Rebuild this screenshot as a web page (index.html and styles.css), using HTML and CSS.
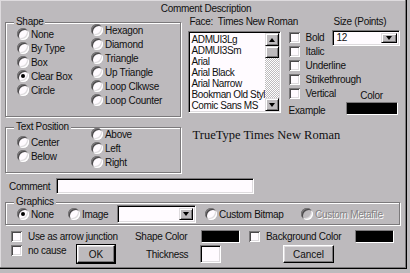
FILE: index.html
```html
<!DOCTYPE HTML>
<html>
	<head>
		<link rel="stylesheet" href="styles.css">
	</head>
	<body>
		<div class="dialog">
			<div class="title">Comment Description</div>
			<div class="upper">
				<div class="left-col">
					<div class="group shape">
						<div class="legend">Shape</div>
						<div class="cols">
							<div class="col col-a">
								<div class="opt"><span class="radio"></span>None</div>
								<div class="opt"><span class="radio"></span>By Type</div>
								<div class="opt"><span class="radio"></span>Box</div>
								<div class="opt"><span class="radio on"></span>Clear Box</div>
								<div class="opt"><span class="radio"></span>Circle</div>
							</div>
							<div class="col col-b">
								<div class="opt"><span class="radio"></span>Hexagon</div>
								<div class="opt"><span class="radio"></span>Diamond</div>
								<div class="opt"><span class="radio"></span>Triangle</div>
								<div class="opt"><span class="radio"></span>Up Triangle</div>
								<div class="opt"><span class="radio"></span>Loop Clkwse</div>
								<div class="opt"><span class="radio"></span>Loop Counter</div>
							</div>
						</div>
					</div>
					<div class="group textpos">
						<div class="legend">Text Position</div>
						<div class="cols">
							<div class="col col-a">
								<div class="opt"><span class="radio"></span>Center</div>
								<div class="opt"><span class="radio"></span>Below</div>
							</div>
							<div class="col col-b">
								<div class="opt"><span class="radio"></span>Above</div>
								<div class="opt"><span class="radio"></span>Left</div>
								<div class="opt"><span class="radio"></span>Right</div>
							</div>
						</div>
					</div>
				</div>
				<div class="right-col">
					<div class="font-head">
						<span class="face-label">Face:&nbsp; Times New Roman</span>
						<span>Size (Points)</span>
					</div>
					<div class="font-body">
						<div class="listbox sunken">
							<div class="list-items">
								<div>ADMUI3Lg</div>
								<div>ADMUI3Sm</div>
								<div>Arial</div>
								<div>Arial Black</div>
								<div>Arial Narrow</div>
								<div>Bookman Old Styl</div>
								<div>Comic Sans MS</div>
							</div>
							<div class="scrollbar">
								<div class="sb-btn"><span class="arrow up"></span></div>
								<div class="sb-thumb"></div>
								<div class="sb-track"></div>
								<div class="sb-btn"><span class="arrow"></span></div>
							</div>
						</div>
						<div class="checks">
							<div class="opt"><span class="check"></span>Bold</div>
							<div class="opt"><span class="check"></span>Italic</div>
							<div class="opt"><span class="check"></span>Underline</div>
							<div class="opt"><span class="check"></span>Strikethrough</div>
							<div class="opt"><span class="check"></span>Vertical</div>
							<div class="example">Example</div>
						</div>
						<div class="size-col">
							<div class="combo size-combo sunken">
								<span class="combo-text">12</span>
								<span class="drop"><span class="arrow"></span></span>
							</div>
							<div class="color-label">Color</div>
							<div class="swatch font-swatch"></div>
						</div>
					</div>
					<div class="sample">TrueType Times New Roman</div>
				</div>
			</div>
			<div class="comment-row">
				<span class="comment-label">Comment</span>
				<div class="field comment-field sunken"></div>
			</div>
			<div class="group graphics">
				<div class="legend">Graphics</div>
				<div class="gfx-row">
					<div class="opt gfx-none"><span class="radio on"></span>None</div>
					<div class="opt gfx-image"><span class="radio"></span>Image</div>
					<div class="combo gfx-combo sunken">
						<span class="combo-text"></span>
						<span class="drop"><span class="arrow"></span></span>
					</div>
					<div class="opt gfx-bitmap"><span class="radio"></span>Custom Bitmap</div>
					<div class="opt disabled"><span class="radio"></span>Custom Metafile</div>
				</div>
			</div>
			<div class="bottom-row first">
				<div class="opt junction"><span class="check"></span>Use as arrow junction</div>
				<span class="shape-color">Shape Color</span>
				<div class="swatch"></div>
				<div class="opt bg-color"><span class="check"></span>Background Color</div>
				<div class="swatch"></div>
			</div>
			<div class="bottom-row second">
				<div class="opt no-cause"><span class="check"></span>no cause</div>
				<button class="btn ok">OK</button>
				<span class="thickness">Thickness</span>
				<div class="field thick-field sunken"></div>
				<button class="btn cancel">Cancel</button>
			</div>
		</div>
	</body>
</html>
```

FILE: styles.css
```css
* {
	box-sizing: border-box;
}
body {
	margin: 0;
	background: #bdbabd;
	font: 10px "Liberation Sans", Arial, sans-serif;
	letter-spacing: -0.3px;
	color: #101010;
}
.dialog {
	width: 407px;
	height: 269px;
	border-right: 1px solid #000;
	border-bottom: 1px solid #000;
	box-shadow: inset -1px -1px 0 #7b797b, inset 1px 1px 0 #dedbde;
}
.title {
	height: 16px;
	padding: 2px 0 0 6px;
	line-height: 14px;
	text-align: center;
}

/* group boxes */
.group {
	border: 1px solid #7b797b;
	box-shadow: inset 1px 1px 0 #fff, 1px 1px 0 #fff;
}
.legend {
	width: fit-content;
	margin: -7px 0 0 8px;
	padding: 0 2px;
	line-height: 12px;
	background: #bdbabd;
}
.cols {
	display: flex;
	padding-left: 11px;
}
.col-a {
	width: 74px;
}
.opt {
	display: flex;
	align-items: center;
	height: 14px;
	white-space: nowrap;
}
.radio {
	position: relative;
	flex: none;
	width: 12px;
	height: 12px;
	margin-right: 2px;
	border-radius: 50%;
	background: #fffbff;
	box-shadow: inset 1px 1px 0 #7b797b, inset -1px -1px 0 #fff, inset 2px 2px 0 #4a484a, inset -2px -2px 0 #dedbde;
}
.radio.on:after {
	content: "";
	position: absolute;
	left: 4px;
	top: 4px;
	width: 4px;
	height: 4px;
	border-radius: 50%;
	background: #000;
}
.check {
	flex: none;
	width: 11px;
	height: 11px;
	margin-right: 6px;
	background: #fffbff;
	box-shadow: inset 1px 1px 0 #7b797b, inset -1px -1px 0 #fff, inset 2px 2px 0 #4a484a, inset -2px -2px 0 #dedbde;
}
.sunken {
	background: #fffbff;
	border: 1px solid;
	border-color: #7b797b #fff #fff #7b797b;
	box-shadow: inset 1px 1px 0 #000, inset -1px -1px 0 #dedbde;
}

.upper {
	display: flex;
	height: 157px;
}
.left-col {
	width: 176px;
	margin-left: 5px;
}
.shape {
	height: 95px;
	margin-top: 6px;
}
.shape .col-a {
	margin-top: -1px;
}
.shape .col-b {
	margin-top: -5px;
}
.textpos {
	height: 46px;
	margin-top: 10px;
}
.textpos .col-a {
	margin-top: 2px;
}
.textpos .col-b {
	margin-top: -6px;
}

/* font side */
.right-col {
	width: 219px;
	margin-left: 7px;
}
.font-head {
	display: flex;
	height: 12px;
	line-height: 12px;
}
.face-label {
	width: 144px;
	margin-left: 2px;
}
.font-body {
	display: flex;
	height: 85px;
}
.listbox {
	display: flex;
	width: 93px;
	height: 82px;
	margin-top: 3px;
	padding: 1px 1px 1px 0;
	overflow: hidden;
}
.list-items {
	flex: 1;
	min-width: 0;
	padding: 1px 0 0 3px;
	line-height: 11px;
	letter-spacing: -0.4px;
	white-space: nowrap;
	overflow: hidden;
}
.scrollbar {
	display: flex;
	flex-direction: column;
	width: 14px;
}
.sb-btn, .sb-thumb, .drop {
	display: flex;
	align-items: center;
	justify-content: center;
	background: #bdbabd;
	border: 1px solid;
	border-color: #dedbde #000 #000 #dedbde;
	box-shadow: inset 1px 1px 0 #fff, inset -1px -1px 0 #7b797b;
}
.sb-btn {
	height: 13px;
}
.sb-thumb {
	height: 12px;
}
.sb-track {
	flex: 1;
	background: repeating-conic-gradient(#fff 0 25%, #bdbabd 0 50%) 0 0 / 2px 2px;
}
.arrow {
	width: 0;
	height: 0;
	border-left: 3.5px solid transparent;
	border-right: 3.5px solid transparent;
	border-top: 4px solid #000;
}
.arrow.up {
	border-top: 0;
	border-bottom: 4px solid #000;
}
.checks {
	width: 43px;
	margin-left: 8px;
	padding-top: 2px;
}
.example {
	margin-top: 4px;
	line-height: 14px;
	white-space: nowrap;
}
.size-col {
	display: flex;
	flex-direction: column;
	width: 68px;
}
.combo {
	display: flex;
	align-items: stretch;
	padding: 2px;
}
.size-combo {
	height: 16px;
	margin-top: 2px;
}
.combo-text {
	flex: 1;
	padding-left: 2px;
	line-height: 10px;
}
.drop {
	width: 16px;
}
.color-label {
	margin: auto 0 0 14px;
	width: 52px;
	line-height: 12px;
	text-align: center;
}
.swatch {
	flex: none;
	height: 13px;
	background: #000;
	border: 1px solid;
	border-color: #7b797b #fff #fff #7b797b;
}
.font-swatch {
	width: 52px;
	margin: 0 0 -2px 14px;
}
.sample {
	margin: 14px 0 0 5px;
	font: 12.5px/16px "Liberation Serif", "Times New Roman", serif;
	letter-spacing: 0;
}

/* comment + graphics */
.comment-row {
	display: flex;
	align-items: center;
	height: 16px;
	margin-top: 5px;
}
.comment-label {
	width: 56px;
	padding-left: 9px;
}
.comment-field {
	width: 198px;
	height: 16px;
}
.graphics {
	width: 395px;
	height: 23px;
	margin: 8px 0 0 5px;
}
.gfx-row {
	display: flex;
	align-items: center;
	height: 18px;
	margin-top: -3px;
	padding-left: 11px;
}
.gfx-none {
	width: 51px;
}
.gfx-image {
	width: 49px;
}
.gfx-combo {
	width: 79px;
	height: 18px;
}
.gfx-combo .drop {
	width: 14px;
}
.gfx-bitmap {
	width: 96px;
	margin-left: 9px;
}
.disabled {
	color: #848284;
	text-shadow: 1px 1px 0 #fff;
}
.disabled .radio {
	background: #bdbabd;
}

/* bottom rows */
.bottom-row {
	display: flex;
	align-items: center;
	padding-left: 11px;
}
.bottom-row.first {
	height: 14px;
	margin-top: 4px;
}
.bottom-row.second {
	height: 18px;
	margin-top: 2px;
}
.junction {
	width: 124px;
}
.shape-color {
	width: 66px;
}
.first .swatch {
	width: 39px;
}
.bg-color {
	width: 106px;
	margin-left: 9px;
}
.no-cause {
	align-self: flex-start;
	width: 66px;
	height: 12px;
	margin-top: -1px;
}
.btn {
	height: 18px;
	padding: 0;
	font: inherit;
	color: inherit;
	background: #bdbabd;
	border: 1px solid;
	border-color: #fff #000 #000 #fff;
	box-shadow: inset -1px -1px 0 #7b797b, inset 1px 1px 0 #dedbde;
}
.ok {
	width: 38px;
	outline: 1px solid #000;
}
.thickness {
	width: 54px;
	margin-left: 31px;
}
.thick-field {
	width: 21px;
	height: 18px;
}
.cancel {
	width: 51px;
	margin-left: 62px;
}
```
